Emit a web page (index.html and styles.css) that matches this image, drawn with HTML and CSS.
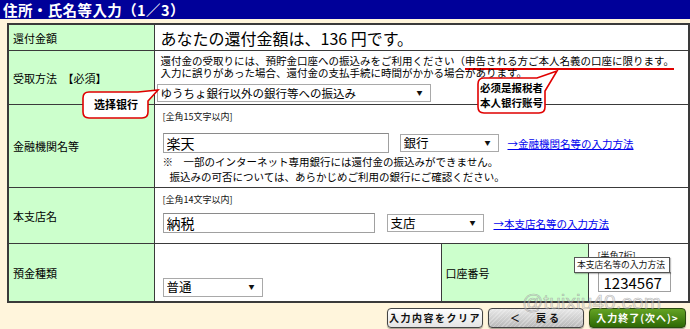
FILE: index.html
```html
<!DOCTYPE html>
<html lang="ja">
<head>
    <meta charset="UTF-8">
    <title>住所・氏名等入力</title>
    <link rel="stylesheet" href="styles.css">
</head>
<body>
<div class="page">
    <h2 class="title">住所・氏名等入力（1／3）</h2>

    <table class="form-table">
        <colgroup>
            <col class="col-label">
            <col class="col-value">
            <col class="col-label2">
            <col class="col-value2">
        </colgroup>
        <tr>
            <th class="h-amount">還付金額</th>
            <td colspan="3" class="amount">あなたの還付金額は、136 円です。</td>
        </tr>
        <tr>
            <th class="h-method">受取方法　【必須】</th>
            <td colspan="3" class="method">
                <div class="notice">還付金の受取りには、預貯金口座への振込みをご利用ください（<span class="marked">申告される方ご本人名義の口座に限ります。</span><br>入力に誤りがあった場合、還付金の支払手続に時間がかかる場合があります。</div>
                <span class="select-wrap sel-method">
                    <select><option>ゆうちょ銀行以外の銀行等への振込み</option></select>
                </span>
            </td>
        </tr>
        <tr>
            <th class="h-bank">金融機関名等</th>
            <td colspan="3" class="bank">
                <div class="hint">[全角15文字以内]</div>
                <div class="field-row">
                    <input type="text" class="txt txt-bank" value="楽天">
                    <span class="select-wrap sel-bank">
                        <select><option>銀行</option></select>
                    </span>
                    <a href="#" class="howto">→金融機関名等の入力方法</a>
                </div>
                <div class="note">※　一部のインターネット専用銀行には還付金の振込みができません。<br><span class="indent">振込みの可否については、あらかじめご利用の銀行にご確認ください。</span></div>
            </td>
        </tr>
        <tr>
            <th class="h-branch">本支店名</th>
            <td colspan="3" class="branch">
                <div class="hint">[全角14文字以内]</div>
                <div class="field-row">
                    <input type="text" class="txt txt-branch" value="納税">
                    <span class="select-wrap sel-branch">
                        <select><option>支店</option></select>
                    </span>
                    <a href="#" class="howto howto-branch">→本支店名等の入力方法</a>
                </div>
            </td>
        </tr>
        <tr>
            <th class="h-kind">預金種類</th>
            <td class="kind">
                <span class="select-wrap sel-kind">
                    <select><option>普通</option></select>
                </span>
            </td>
            <th class="h-number">口座番号</th>
            <td class="number">
                <div class="hint">[半角7桁]</div>
                <input type="text" class="txt txt-number" value="1234567">
            </td>
        </tr>
    </table>

    <div class="actions">
        <button class="btn btn-clear">入力内容をクリア</button>
        <button class="btn btn-back">＜　戻る</button>
        <button class="btn btn-next">入力終了(次へ)&gt;</button>
    </div>

    <!-- annotations laid over the form -->
    <div class="callout callout-select">
        <svg width="78" height="31" viewBox="0 0 78 31">
            <path d="M7,3 H56 L76,1 L66,12 V23 Q66,29 60,29 H7 Q1,29 1,23 V9 Q1,3 7,3 Z" fill="#fff" stroke="#e00000" stroke-width="1.6"/>
        </svg>
        <div class="callout-text">选择银行</div>
    </div>

    <div class="callout callout-owner">
        <svg width="83" height="46" viewBox="0 0 83 46">
            <path d="M7,9 H60 L80,2 L68,22 V38 Q68,44 62,44 H7 Q1,44 1,38 V15 Q1,9 7,9 Z" fill="#fff" stroke="#e00000" stroke-width="1.6"/>
        </svg>
        <div class="callout-text">必须是报税者<br>本人银行账号</div>
    </div>

    <div class="tooltip">本支店名等の入力方法</div>
    <div class="watermark">@tuixiu40.com</div>
</div>
</body>
</html>
```

FILE: styles.css
```css
body {
    margin: 0;
    background: #fff5dc;
    font-family: "Noto Sans CJK JP", "Noto Sans CJK SC", sans-serif;
    color: #000;
}
.page {
    position: relative;
    width: 690px;
    height: 329px;
    overflow: hidden;
}
.title {
    margin: 0;
    height: 19px;
    line-height: 20px;
    padding-left: 3px;
    background: #000099;
    color: #fff;
    font-size: 14.5px;
    letter-spacing: 0.4px;
    font-weight: bold;
    overflow: hidden;
}
.form-table {
    margin: 4px 0 0 7px;
    width: 681px;
    border-collapse: collapse;
    table-layout: fixed;
    border: 2px solid #3a3a3a;
}
.col-label { width: 146px; }
.col-value { width: 287px; }
.col-label2 { width: 147px; }
.col-value2 { width: 101px; }
.form-table th,
.form-table td {
    border: 1px solid #3a3a3a;
    padding: 0;
}
.form-table th {
    background: #ccffcc;
    font-size: 11px;
    font-weight: normal;
    text-align: left;
    padding-left: 4px;
    vertical-align: middle;
    white-space: nowrap;
}
.form-table td {
    background: #fff;
    vertical-align: top;
    padding-left: 8px;
}
.h-amount { height: 25px; }
.h-method { height: 53px; }
.h-bank { height: 82px; }
.h-branch { height: 55px; }
.h-kind { height: 57px; }

.amount {
    font-size: 16px;
    padding-left: 6px !important;
    vertical-align: middle !important;
}
.method {
    padding: 4px 0 0 6px !important;
}
.notice {
    font-size: 10.5px;
    line-height: 12px;
    white-space: nowrap;
}
.marked {
    border-bottom: 2px solid #e00000;
}
.hint {
    font-size: 9px;
    line-height: 14px;
    color: #111;
}
.bank, .branch { padding-top: 5px !important; }
.field-row {
    display: flex;
    align-items: center;
    margin-top: 9px;
}
.branch .field-row { margin-top: 6px; }
.note {
    margin-top: 1px;
    font-size: 10.5px;
    line-height: 15px;
    white-space: nowrap;
}
.indent { padding-left: 7px; }

.txt {
    box-sizing: border-box;
    height: 20px;
    border: 1px solid #a0a0a0;
    border-top-color: #8a8a8a;
    padding: 0 3px;
    font-family: inherit;
    font-size: 14px;
    color: #000;
    background: #fff;
    outline: none;
}
.txt-bank { width: 226px; }
.txt-branch { width: 212px; }
.txt-number {
    width: 73px;
    margin-top: 9px;
    font-size: 15px;
    padding-left: 5px;
}

.select-wrap {
    position: relative;
    display: inline-block;
}
.select-wrap select {
    box-sizing: border-box;
    height: 18px;
    border: 1px solid #a9a9a9;
    background: #fff;
    padding: 0 0 0 3px;
    font-family: inherit;
    font-size: 12.5px;
    line-height: 16px;
    color: #000;
    -webkit-appearance: none;
    appearance: none;
    border-radius: 0;
    display: block;
}
.select-wrap::after {
    content: "▼";
    position: absolute;
    right: 8px;
    top: 5px;
    font-size: 6px;
    line-height: 8px;
    color: #111;
}
.sel-method {
    margin: 3px 0 0 -4px;
}
.sel-method select {
    width: 274px;
    font-size: 11.5px;
}
.sel-bank { margin-left: 11px; }
.sel-bank select { width: 99px; }
.sel-branch { margin-left: 12px; }
.sel-branch select { width: 97px; }
.kind { padding-top: 29px !important; }
.sel-kind select { width: 100px; height: 19px; }
.number {
    padding: 5px 0 0 9px !important;
}

.howto {
    margin-left: 9px;
    font-size: 10.5px;
    color: #0000ee;
    text-decoration: underline;
}
.howto-branch { margin-left: 10px; }

.actions {
    display: flex;
    justify-content: flex-end;
    gap: 5px;
    margin: 5px 4px 0 0;
}
.btn {
    width: 96px;
    height: 20px;
    padding: 0;
    border: 1px solid #444;
    border-radius: 4px;
    font-family: inherit;
    font-size: 10px;
    font-weight: bold;
    letter-spacing: 1.5px;
    line-height: 18px;
    color: #111;
    box-shadow: 0 1px 1px rgba(0,0,0,0.35);
}
.btn-clear {
    background: linear-gradient(#ffffff, #e4e4e4);
}
.btn-back {
    background:
        repeating-linear-gradient(135deg, rgba(255,255,255,0.25) 0 1px, transparent 1px 3px),
        linear-gradient(#e8e8e8, #b9b9b9);
    letter-spacing: 3px;
}
.btn-next {
    width: 97px;
    background: linear-gradient(#64a324, #2e6905);
    border-color: #2a4a10;
    color: #fff;
    letter-spacing: 1px;
}

.callout {
    position: absolute;
}
.callout svg {
    display: block;
}
.callout-select {
    left: 82px;
    top: 89px;
}
.callout-owner {
    left: 477px;
    top: 69px;
}
.callout-text {
    position: absolute;
    font-family: "Noto Sans CJK SC", sans-serif;
    font-weight: bold;
    color: #000;
    white-space: nowrap;
}
.callout-select .callout-text {
    left: 12px;
    top: 8px;
    font-size: 11px;
    line-height: 15px;
}
.callout-owner .callout-text {
    left: 3px;
    top: 11px;
    font-size: 10.5px;
    line-height: 15px;
}

.tooltip {
    position: absolute;
    left: 574px;
    top: 257px;
    box-sizing: border-box;
    width: 96px;
    height: 16px;
    border: 1px solid #555;
    background: #fff;
    font-size: 8.8px;
    line-height: 14px;
    padding-left: 2px;
    color: #111;
    white-space: nowrap;
    box-shadow: 1px 1px 1px rgba(0,0,0,0.25);
}
.watermark {
    position: absolute;
    left: 522px;
    top: 290px;
    font-family: "Liberation Sans", sans-serif;
    font-size: 21px;
    color: rgba(215,215,215,0.45);
    -webkit-text-stroke: 0.6px rgba(110,110,110,0.45);
    pointer-events: none;
}
```
